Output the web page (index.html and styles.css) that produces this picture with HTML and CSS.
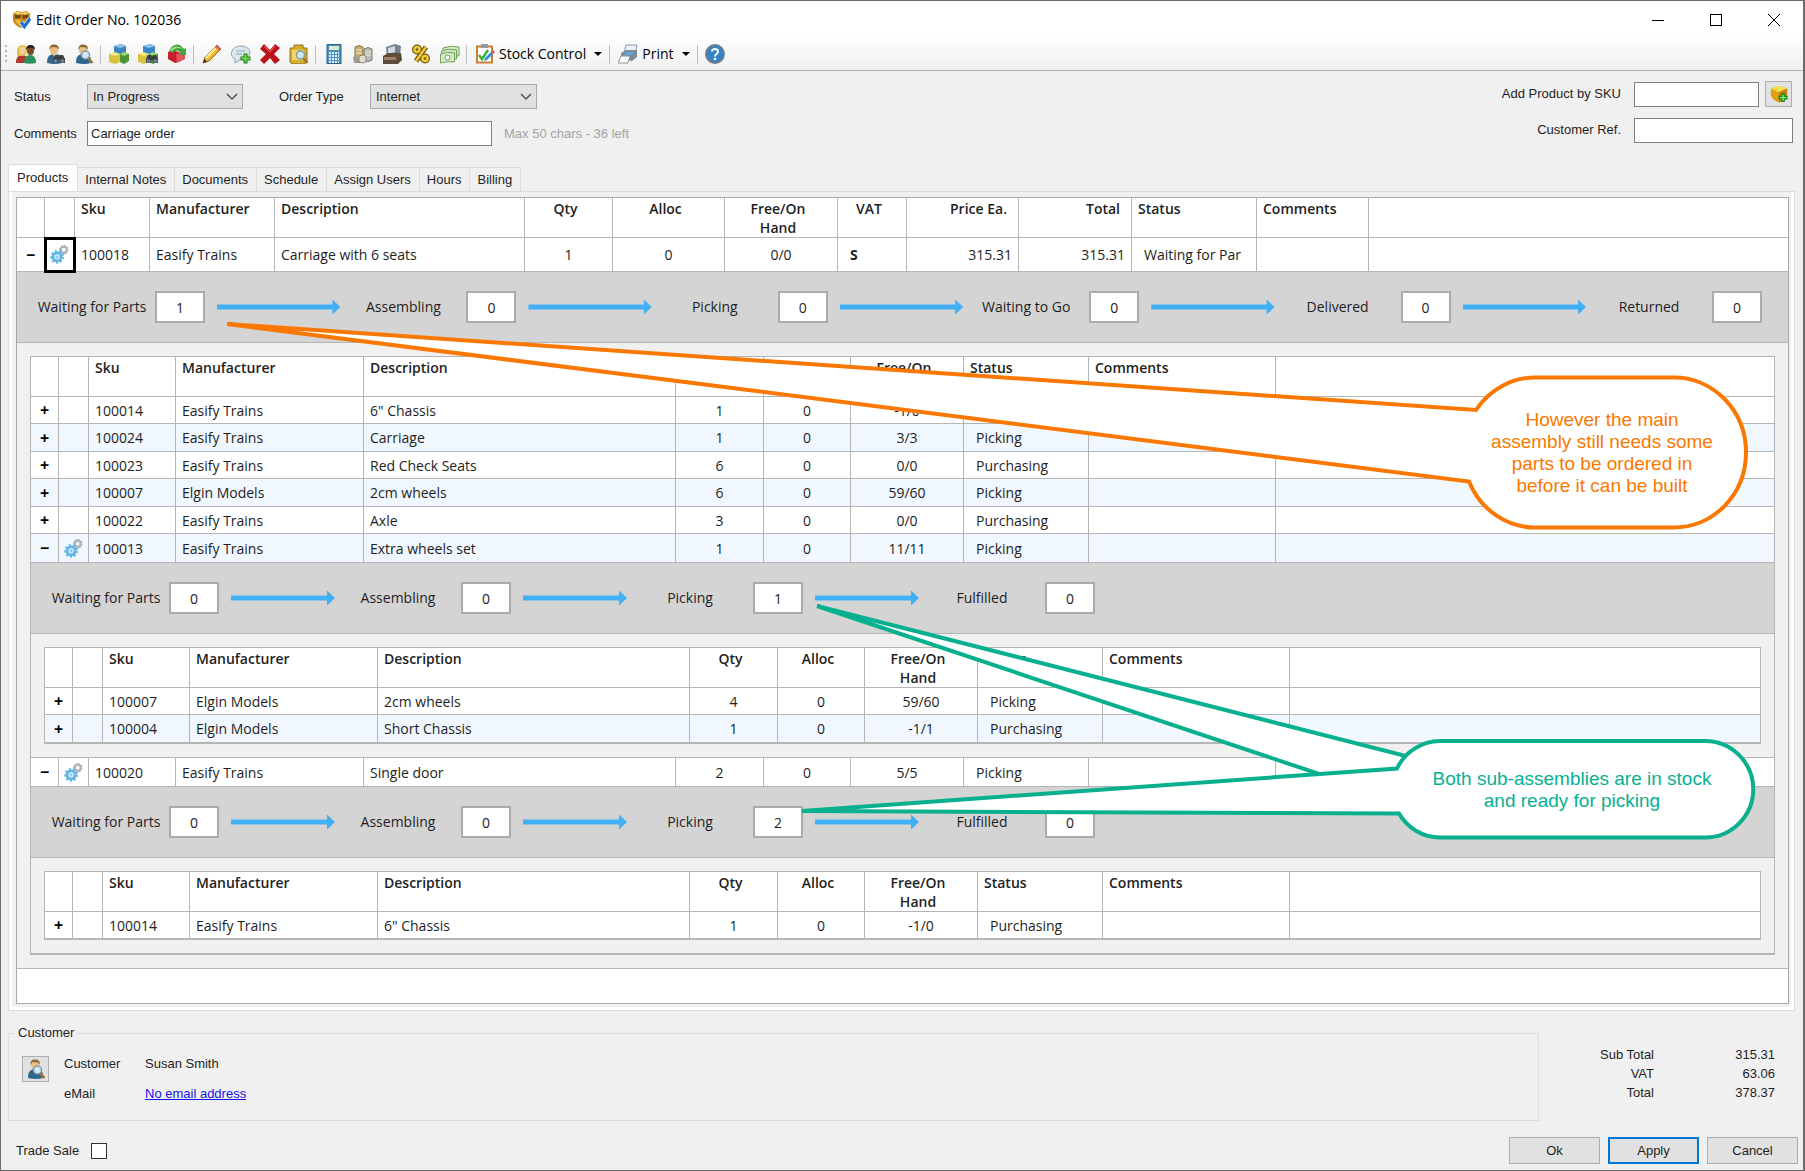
FILE: index.html
```html
<!DOCTYPE html>
<html lang="en">
<head>
<meta charset="utf-8">
<title>Edit Order No. 102036</title>
<link rel="stylesheet" href="styles.css">
</head>
<body>
<svg class="sprite" aria-hidden="true">
  <symbol id="i-person" viewBox="0 0 20 20">
    <path d="M2 19c0-6 2-9 8-9s7 3 7 9q-7 2-15 0z" fill="#2f6690"/>
    <path d="M8 10h4l-2 5z" fill="#dfeaf2"/>
    <ellipse cx="9" cy="6" rx="4" ry="5" fill="#e9bd84"/>
    <path d="M4.500 6Q4 0 9.500 0.500T13.500 6L12 3.500 6.500 3z" fill="#8a6a33"/>
  </symbol>
  <symbol id="i-binoc" viewBox="0 0 20 20">
    <path d="M8 19v-4l2-4h3l1 2 1-2h3l2 4v4h-5v-3h-2v3z" fill="#3a3f45"/>
    <circle cx="10.500" cy="17" r="2" fill="#6e7d89"/><circle cx="17.500" cy="17" r="2" fill="#6e7d89"/>
  </symbol>
  <symbol id="i-lens" viewBox="0 0 20 20">
    <path d="M14 14l4.500 5" stroke="#a5702c" stroke-width="2.500"/>
    <circle cx="11.500" cy="11" r="4" fill="#cfe8f7" stroke="#8699a5" stroke-width="1.500"/>
  </symbol>
  <symbol id="i-cubes" viewBox="0 0 20 20">
    <path d="M5 2l7-2 5 2v8l-6 2-6-2z" fill="#3b86c8"/><path d="M5 2l7-2 5 2-6 2z" fill="#8cc4ee"/>
    <path d="M0 10l5-2 6 2v8l-5 2-6-2z" fill="#d9c33c"/><path d="M0 10l5-2 6 2-5 2z" fill="#f6eb8e"/>
    <path d="M11 10l4-2 5 2v7l-5 3-4-2z" fill="#49952f"/><path d="M11 10l4-2 5 2-5 2z" fill="#9bd679"/>
  </symbol>
  <symbol id="i-gears" viewBox="0 0 20 20">
    <circle cx="14.500" cy="5" r="3.200" fill="none" stroke="#a9b1b9" stroke-width="2.400"/>
    <circle cx="14.500" cy="5" r="4.400" fill="none" stroke="#a9b1b9" stroke-width="1.200" stroke-dasharray="1.800 1.600"/>
    <circle cx="7.500" cy="12.500" r="4.300" fill="#d8effc" stroke="#5fb2e4" stroke-width="2.800"/>
    <circle cx="7.500" cy="12.500" r="6.300" fill="none" stroke="#5fb2e4" stroke-width="1.800" stroke-dasharray="2.200 2.200"/>
    <circle cx="7.500" cy="12.500" r="1.600" fill="#8cc8ec"/>
  </symbol>
  <symbol id="i-box" viewBox="0 0 20 20">
    <path d="M1 4l9-3 9 3v8q-3 6-9 7.500Q3 17 1 12z" fill="#e0a010"/>
    <path d="M1 4l9-3 9 3-9 4z" fill="#f9de55"/><path d="M10 8l9-4v8q-3 6-9 7.500z" fill="#c17f0c"/>
  </symbol>
</svg>

<div class="window">
  <header class="titlebar">
    <svg class="app-icon" viewBox="0 0 20 20"><path d="M1 4l4-3 5 1 5-1 4 3v7q-2 6-9 8-7-2-9-8z" fill="#c98a1a"/><path d="M3 5h6v4H3zM11 5h6v4h-6z" fill="#6f480e"/><path d="M2 3l4-1 4 1 4-1 4 1-4 2-4-1-4 1z" fill="#f6d267"/><path d="M3 10h6v6q-4-1-6-6z" fill="#efb733"/><path d="M9.500 13l3.500 4.500L19 9" fill="none" stroke="#fff" stroke-width="5"/><path d="M9.500 13l3.500 4.500L19 9" fill="none" stroke="#1f6fdc" stroke-width="3.500"/></svg>
    <h1 class="title">Edit Order No. 102036</h1>
    <button class="caption" aria-label="Minimise"><svg width="12" height="12"><path d="M0 6.500h12" stroke="#000"/></svg></button>
    <button class="caption" aria-label="Maximise"><svg width="12" height="12"><rect x=".5" y=".5" width="11" height="11" fill="none" stroke="#000"/></svg></button>
    <button class="caption" aria-label="Close"><svg width="12" height="12"><path d="M0 0l12 12M12 0L0 12" stroke="#000"/></svg></button>
  </header>

  <nav class="toolbar" aria-label="Order tools">
    <span class="grip"></span>
    <button class="tool" aria-label="Customers"><svg viewBox="0 0 20 20"><path d="M0 19q0-8 6-8t7 8z" fill="#b8352c"/><path d="M1 12Q0 1 6 1t5 6l-1 4-4 1z" fill="#e3c14e"/><ellipse cx="6.500" cy="6.500" rx="2.800" ry="3.800" fill="#f2cf9f"/><path d="M8 19q0-8 6-8t6 8q-6 1.500-12 0z" fill="#2f8f5a"/><ellipse cx="14.500" cy="6.500" rx="3.500" ry="4.500" fill="#7a4a26"/><path d="M10 6q0-5 4.500-5T19 6l-2-2h-5z" fill="#2b1d14"/></svg></button>
    <button class="tool" aria-label="Find customer"><svg viewBox="0 0 20 20"><use href="#i-person"/><use href="#i-binoc"/></svg></button>
    <button class="tool" aria-label="View customer"><svg viewBox="0 0 20 20"><use href="#i-person"/><use href="#i-lens"/></svg></button>
    <span class="sep"></span>
    <button class="tool" aria-label="Products"><svg viewBox="0 0 20 20"><use href="#i-cubes"/></svg></button>
    <button class="tool" aria-label="Find product"><svg viewBox="0 0 20 20"><use href="#i-cubes"/><use href="#i-binoc"/></svg></button>
    <button class="tool" aria-label="Refresh product"><svg viewBox="0 0 20 20"><path d="M1 8l5-2 8 3v8l-6 2-7-4z" fill="#c51f2d"/><path d="M9 10l9-2v7l-8 4z" fill="#e5505a"/><path d="M2 7Q6-1 13 1l4 4 2-1v7h-7l2-2Q9 4 6 9z" fill="#42a53c"/><path d="M3 6q4-5 10-3l2 2Q9 2 5 7z" fill="#9fdc8b"/></svg></button>
    <span class="sep"></span>
    <button class="tool" aria-label="Edit"><svg viewBox="0 0 20 20"><path d="M1 19l2-6L15 1l4 4L7 17z" fill="#eeb52e" stroke="#93641a"/><path d="M3 13L13 3l2 2L5 15z" fill="#fbe58e"/><path d="M15 1l4 4-2 2-4-4z" fill="#d46a55"/><path d="M1 19l1.500-4 2.500 2.500z" fill="#3c3020"/></svg></button>
    <button class="tool" aria-label="Add comment"><svg viewBox="0 0 20 20"><path d="M4 15q-4-2-3.500-6.500Q2 2 10 2t9 6.500Q18 15 10 15l-6 4z" fill="#dbe7ef" stroke="#8ba0b1"/><path d="M5 7h9M5 10h6" stroke="#93acbf"/><path d="M14.500 9.500v10M9.500 14.500h10" stroke="#1e7d1b" stroke-width="4"/><path d="M14.500 10.500v8M10.500 14.500h8" stroke="#6fd84d" stroke-width="2"/></svg></button>
    <button class="tool" aria-label="Delete"><svg viewBox="0 0 20 20"><path d="M4 0l6 6 5-6 5 4-6 6 6 6-5 4-5-6-6 6-4-4 6-6-6-5z" fill="#bd1118"/><path d="M4 2l6 6 5-6" fill="none" stroke="#ee7072"/></svg></button>
    <button class="tool" aria-label="View product"><svg viewBox="0 0 20 20"><path d="M1 4h4V1h9v3h4v14l-3 2H3l-2-2z" fill="#d6ae31" stroke="#92731c"/><path d="M3 6h12v10H3z" fill="#f0d56b"/><use href="#i-lens"/></svg></button>
    <span class="sep"></span>
    <button class="tool" aria-label="Calculator"><svg viewBox="0 0 20 20"><rect x="3" y=".5" width="14" height="19" fill="#4b8fc0" stroke="#2d658f"/><rect x="5" y="2" width="10" height="4" fill="#d7edc8"/><path d="M5 9h10M5 12h10M5 15h10M5 18h10" stroke="#e3f1fb" stroke-width="2" stroke-dasharray="2 1"/></svg></button>
    <button class="tool" aria-label="Payments"><svg viewBox="0 0 20 20"><path d="M2 3q4-3 8 0v14q-4 3-8 0z" fill="#c6b067" stroke="#837545"/><path d="M11 5q4-3 8 0v11q-4 3-8 0z" fill="#bcbcb5" stroke="#77776f"/><path d="M6 12q4-2 7 0v6q-3 2-7 0z" fill="#deded9" stroke="#83837b"/><path d="M3 6h6M3 9h6M12 8h6M12 11h6" stroke="#f4eedc"/><path d="M0 13h5v6H1z" fill="#9a9a92"/></svg></button>
    <button class="tool" aria-label="Till"><svg viewBox="0 0 20 20"><path d="M4 3l9-3 6 2-1 10-13 2z" fill="#77818b"/><path d="M6 4l7-2v6l-7 2z" fill="#cbdce8"/><path d="M1 12l5-3h13l1 7-4 4H1z" fill="#5c4a3b"/><path d="M2 13h12v3H2z" fill="#9d8068"/></svg></button>
    <button class="tool" aria-label="Discount"><svg viewBox="0 0 20 20"><g fill="none" stroke="#6f5714" stroke-width="5"><circle cx="6" cy="5.500" r="2.500"/><circle cx="14" cy="14.500" r="2.500"/><path d="M15 3L5 17"/></g><g fill="none" stroke="#f2c933" stroke-width="2.500"><circle cx="6" cy="5.500" r="2.500"/><circle cx="14" cy="14.500" r="2.500"/><path d="M15 3L5 17"/></g></svg></button>
    <button class="tool" aria-label="Cash"><svg viewBox="0 0 20 20"><g fill="#d2e9c4" stroke="#6fa35b"><path d="M3 4q7-3 16-1v9q-8-2-16 1z"/><path d="M1.500 7q7-3 15-1v9q-8-2-15 1z"/><path d="M.5 10q7-3 14-1v9q-7-1-14 1z"/></g><circle cx="7.500" cy="13.500" r="2.500" fill="#f6fbf2" stroke="#6fa35b"/></svg></button>
    <span class="sep"></span>
    <button class="tool tool-menu"><svg viewBox="0 0 20 20"><path d="M2 2.500h15v16H2z" fill="#fff" stroke="#c98035" stroke-width="2"/><path d="M6 0h7v4H6z" fill="#8f9aa5"/><path d="M4 11l3 4 6-9" fill="none" stroke="#3fae38" stroke-width="2.500"/><path d="M9 17l1-3 7-7 2 2-7 7z" fill="#2f8ede"/><path d="M16 8l2-2 2 2-2 2z" fill="#e2564e"/></svg><span>Stock Control</span><i class="caret"></i></button>
    <span class="sep"></span>
    <button class="tool tool-menu"><svg viewBox="0 0 20 20"><path d="M8 1h11l-2 8H6z" fill="#eef2f6" stroke="#8c98a3"/><path d="M3 9l5-3h11v7l-5 4-11-2z" fill="#7d8b98"/><path d="M5 10l4-2h8l-4 3z" fill="#5ea8dd"/><path d="M3 12h9l-2 7H0z" fill="#fafcfd" stroke="#8c98a3"/></svg><span>Print</span><i class="caret"></i></button>
    <span class="sep"></span>
    <button class="tool" aria-label="Help"><svg viewBox="0 0 20 20"><circle cx="10" cy="10" r="9" fill="#3483c4" stroke="#6b7d8c" stroke-width="2"/><path d="M7 7.500Q7 5 10 5t3 2.500Q13 9 11.500 10 10 11 10 12.500" fill="none" stroke="#fff" stroke-width="2"/><circle cx="10" cy="15" r="1.300" fill="#fff"/></svg></button>
  </nav>

  <form class="order">
    <div class="order-left">
      <label for="status">Status</label>
      <div class="row">
        <div class="combo combo-status"><select id="status"><option>In Progress</option></select><svg width="12" height="8"><path d="M1 1l5 5 5-5" fill="none" stroke="#555" stroke-width="1.500"/></svg></div>
        <label for="type" class="type-label">Order Type</label>
        <div class="combo combo-type"><select id="type"><option>Internet</option></select><svg width="12" height="8"><path d="M1 1l5 5 5-5" fill="none" stroke="#555" stroke-width="1.500"/></svg></div>
      </div>
      <label for="comments">Comments</label>
      <div class="row"><input class="box comments" id="comments" type="text" value="Carriage order"><span class="hint">Max 50 chars - 36 left</span></div>
    </div>
    <div class="order-right">
      <label for="sku">Add Product by SKU</label>
      <div class="row"><input class="box sku" id="sku" type="text"><button type="button" class="icon-btn" aria-label="Add product"><svg width="18" height="18" viewBox="0 0 20 20"><use href="#i-box"/><path d="M14.500 9v10M9.500 14h10" stroke="#0f8a12" stroke-width="4"/><path d="M14.500 10.500v7M11 14h7" stroke="#8ee87a" stroke-width="1.500"/></svg></button></div>
      <label for="ref">Customer Ref.</label>
      <input class="box" id="ref" type="text">
    </div>
  </form>

  <div class="tabs" role="tablist">
    <button class="tab active" role="tab" aria-selected="true">Products</button>
    <button class="tab" role="tab">Internal Notes</button>
    <button class="tab" role="tab">Documents</button>
    <button class="tab" role="tab">Schedule</button>
    <button class="tab" role="tab">Assign Users</button>
    <button class="tab" role="tab">Hours</button>
    <button class="tab" role="tab">Billing</button>
  </div>

  <main class="panel">
    <div class="frame">
      <table class="grid main-grid">
        <colgroup><col class="w28"><col class="w30"><col class="w75"><col class="w125"><col class="w250"><col class="w88"><col class="w112"><col class="w113"><col class="w69"><col class="w112"><col class="w113"><col class="w125"><col class="w112"><col></colgroup>
        <thead><tr><th></th><th></th><th>Sku</th><th>Manufacturer</th><th>Description</th><th class="c">Qty</th><th class="c">Alloc</th><th class="c">Free/On<br>Hand</th><th class="c">VAT</th><th class="r">Price Ea.</th><th class="r">Total</th><th>Status</th><th>Comments</th><th></th></tr></thead>
        <tbody>
          <tr class="open top"><td class="t"><button aria-label="Collapse">−</button></td><td class="t current"><svg class="gear"><use href="#i-gears"/></svg></td><td>100018</td><td>Easify Trains</td><td>Carriage with 6 seats</td><td class="c">1</td><td class="c">0</td><td class="c">0/0</td><td class="vat">S</td><td class="r">315.31</td><td class="r">315.31</td><td class="s">Waiting for Par</td><td></td><td></td></tr>
          <tr class="detail"><td colspan="14">
            <div class="flow">
              <label class="step"><span>Waiting for Parts</span><input value="1"></label><i class="arrow"></i>
              <label class="step"><span>Assembling</span><input value="0"></label><i class="arrow"></i>
              <label class="step"><span>Picking</span><input value="0"></label><i class="arrow"></i>
              <label class="step"><span>Waiting to Go</span><input value="0"></label><i class="arrow"></i>
              <label class="step"><span>Delivered</span><input value="0"></label><i class="arrow"></i>
              <label class="step"><span>Returned</span><input value="0"></label>
            </div>
            <div class="nest">
              <table class="grid sub-grid">
                <colgroup><col class="w28"><col class="w30"><col class="w87"><col class="w188"><col class="w312"><col class="w88"><col class="w87"><col class="w113"><col class="w125"><col class="w187"><col></colgroup>
                <thead><tr><th></th><th></th><th>Sku</th><th>Manufacturer</th><th>Description</th><th class="c">Qty</th><th class="c">Alloc</th><th class="c">Free/On<br>Hand</th><th>Status</th><th>Comments</th><th></th></tr></thead>
                <tbody>
                  <tr><td class="t"><button aria-label="Expand">+</button></td><td></td><td>100014</td><td>Easify Trains</td><td>6" Chassis</td><td class="c">1</td><td class="c">0</td><td class="c">-1/0</td><td></td><td></td><td></td></tr>
                  <tr class="alt"><td class="t"><button aria-label="Expand">+</button></td><td></td><td>100024</td><td>Easify Trains</td><td>Carriage</td><td class="c">1</td><td class="c">0</td><td class="c">3/3</td><td class="s">Picking</td><td></td><td></td></tr>
                  <tr><td class="t"><button aria-label="Expand">+</button></td><td></td><td>100023</td><td>Easify Trains</td><td>Red Check Seats</td><td class="c">6</td><td class="c">0</td><td class="c">0/0</td><td class="s">Purchasing</td><td></td><td></td></tr>
                  <tr class="alt"><td class="t"><button aria-label="Expand">+</button></td><td></td><td>100007</td><td>Elgin Models</td><td>2cm wheels</td><td class="c">6</td><td class="c">0</td><td class="c">59/60</td><td class="s">Picking</td><td></td><td></td></tr>
                  <tr><td class="t"><button aria-label="Expand">+</button></td><td></td><td>100022</td><td>Easify Trains</td><td>Axle</td><td class="c">3</td><td class="c">0</td><td class="c">0/0</td><td class="s">Purchasing</td><td></td><td></td></tr>
                  <tr class="alt open"><td class="t"><button aria-label="Collapse">−</button></td><td class="t"><svg class="gear"><use href="#i-gears"/></svg></td><td>100013</td><td>Easify Trains</td><td>Extra wheels set</td><td class="c">1</td><td class="c">0</td><td class="c">11/11</td><td class="s">Picking</td><td></td><td></td></tr>
                  <tr class="detail"><td colspan="11">
                    <div class="flow sub">
                      <label class="step"><span>Waiting for Parts</span><input value="0"></label><i class="arrow"></i>
                      <label class="step"><span>Assembling</span><input value="0"></label><i class="arrow"></i>
                      <label class="step"><span>Picking</span><input value="1"></label><i class="arrow"></i>
                      <label class="step"><span>Fulfilled</span><input value="0"></label>
                    </div>
                    <div class="nest">
                      <table class="grid sub-grid">
                        <colgroup><col class="w28"><col class="w30"><col class="w87"><col class="w188"><col class="w312"><col class="w88"><col class="w87"><col class="w113"><col class="w125"><col class="w187"><col></colgroup>
                        <thead><tr><th></th><th></th><th>Sku</th><th>Manufacturer</th><th>Description</th><th class="c">Qty</th><th class="c">Alloc</th><th class="c">Free/On<br>Hand</th><th>Status</th><th>Comments</th><th></th></tr></thead>
                        <tbody>
                          <tr><td class="t"><button aria-label="Expand">+</button></td><td></td><td>100007</td><td>Elgin Models</td><td>2cm wheels</td><td class="c">4</td><td class="c">0</td><td class="c">59/60</td><td class="s">Picking</td><td></td><td></td></tr>
                          <tr class="alt"><td class="t"><button aria-label="Expand">+</button></td><td></td><td>100004</td><td>Elgin Models</td><td>Short Chassis</td><td class="c">1</td><td class="c">0</td><td class="c">-1/1</td><td class="s">Purchasing</td><td></td><td></td></tr>
                        </tbody>
                      </table>
                    </div>
                  </td></tr>
                  <tr class="open"><td class="t"><button aria-label="Collapse">−</button></td><td class="t"><svg class="gear"><use href="#i-gears"/></svg></td><td>100020</td><td>Easify Trains</td><td>Single door</td><td class="c">2</td><td class="c">0</td><td class="c">5/5</td><td class="s">Picking</td><td></td><td></td></tr>
                  <tr class="detail"><td colspan="11">
                    <div class="flow sub">
                      <label class="step"><span>Waiting for Parts</span><input value="0"></label><i class="arrow"></i>
                      <label class="step"><span>Assembling</span><input value="0"></label><i class="arrow"></i>
                      <label class="step"><span>Picking</span><input value="2"></label><i class="arrow"></i>
                      <label class="step"><span>Fulfilled</span><input value="0"></label>
                    </div>
                    <div class="nest">
                      <table class="grid sub-grid">
                        <colgroup><col class="w28"><col class="w30"><col class="w87"><col class="w188"><col class="w312"><col class="w88"><col class="w87"><col class="w113"><col class="w125"><col class="w187"><col></colgroup>
                        <thead><tr><th></th><th></th><th>Sku</th><th>Manufacturer</th><th>Description</th><th class="c">Qty</th><th class="c">Alloc</th><th class="c">Free/On<br>Hand</th><th>Status</th><th>Comments</th><th></th></tr></thead>
                        <tbody>
                          <tr><td class="t"><button aria-label="Expand">+</button></td><td></td><td>100014</td><td>Easify Trains</td><td>6" Chassis</td><td class="c">1</td><td class="c">0</td><td class="c">-1/0</td><td class="s">Purchasing</td><td></td><td></td></tr>
                        </tbody>
                      </table>
                    </div>
                  </td></tr>
                </tbody>
              </table>
            </div>
          </td></tr>
        </tbody>
      </table>
    </div>
  </main>

  <section class="summary">
    <fieldset class="customer">
      <legend>Customer</legend>
      <button class="icon-btn" aria-label="View customer"><svg width="20" height="20"><use href="#i-person"/><use href="#i-lens"/></svg></button>
      <dl>
        <dt>Customer</dt><dd>Susan Smith</dd>
        <dt>eMail</dt><dd><a href="#">No email address</a></dd>
      </dl>
    </fieldset>
    <dl class="totals">
      <dt>Sub Total</dt><dd>315.31</dd>
      <dt>VAT</dt><dd>63.06</dd>
      <dt>Total</dt><dd>378.37</dd>
    </dl>
  </section>

  <footer class="footer">
    <label class="trade">Trade Sale <input type="checkbox"></label>
    <button class="btn">Ok</button>
    <button class="btn primary">Apply</button>
    <button class="btn">Cancel</button>
  </footer>

  <div class="notes">
    <svg class="note-shapes" width="1800" height="900">
      <path class="orange" d="M227 324L1476 410A72 75 0 0 1 1536 377.500H1674A72 75 0 0 1 1674 527.500H1536A72 75 0 0 1 1469 481.500Z"/>
      <path class="green" d="M817 606L1406 756V803Z"/>
      <path class="green" d="M802 811L1397 768.500A48 48 0 0 1 1440 741H1705A48 48 0 0 1 1705 837.500H1440A48 48 0 0 1 1399 813.500Z"/>
    </svg>
    <p class="note note-orange">However the main<br>assembly still needs some<br>parts to be ordered in<br>before it can be built</p>
    <p class="note note-green">Both sub-assemblies are in stock<br>and ready for picking</p>
  </div>
</div>
</body>
</html>
```
FILE: styles.css
```css
* { box-sizing: border-box; }

body {
  margin: 0;
  background: #f0f0f0;
  color: #1e1e1e;
  font: 13px/16px "Liberation Sans", Arial, sans-serif;
}

button, input, select { font: inherit; color: inherit; margin: 0; border-radius: 0; }
button { padding: 0; border: 0; background: none; }
svg { display: block; }
.sprite { position: absolute; width: 0; height: 0; }

.window {
  position: relative;
  display: flex;
  flex-direction: column;
  min-height: 100vh;
  border: 1px solid #6b6b6b;
  border-right-width: 2px;
}

/* Title bar */
.titlebar {
  display: flex;
  align-items: center;
  height: 37px;
  padding-left: 11px;
  background: #fff;
}
.app-icon { width: 19px; height: 19px; }
.title {
  flex: 1;
  margin: 0 0 0 5px;
  font: 14px/20px "Open Sans", "Noto Sans", sans-serif;
  color: #000;
}
.caption { display: grid; place-items: center; width: 58px; height: 37px; }

/* Toolbar */
.toolbar {
  display: flex;
  align-items: center;
  height: 33px;
  padding-left: 4px;
  border-bottom: 1px solid #b4b4b4;
  background: linear-gradient(#fdfdfd, #f0f0f0);
}
.grip { width: 2px; height: 18px; margin-right: 4px; background: repeating-linear-gradient(#b8b8b8 0 2px, transparent 2px 5px); }
.tool { display: grid; place-items: center; width: 29px; height: 26px; }
.tool svg { width: 20px; height: 20px; }
.sep { width: 1px; height: 19px; margin: 0 3px 0 2px; background: #bdbdbd; }
.tool-menu {
  display: flex;
  align-items: center;
  gap: 4px;
  width: auto;
  padding: 0 5px;
  font: 14px/20px "Open Sans", "Noto Sans", sans-serif;
  color: #000;
}
.caret { margin-left: 4px; border: 4px solid transparent; border-top-color: #000; border-bottom: 0; }

/* Order fields */
.order { display: flex; justify-content: space-between; height: 93px; padding: 10px 10px 0 13px; }
.row { display: flex; align-items: center; }
.order-left {
  display: grid;
  grid-template-columns: 73px auto;
  grid-auto-rows: 25px;
  row-gap: 12px;
  align-items: center;
  padding-top: 3px;
}
.order-right {
  display: grid;
  grid-template-columns: auto 159px;
  grid-auto-rows: 26px;
  gap: 10px 13px;
  align-items: center;
  text-align: right;
}
.combo { position: relative; }
.combo select {
  width: 100%;
  height: 25px;
  padding: 0 5px;
  border: 1px solid #a3abb3;
  background: #e1e1e1;
  appearance: none;
}
.combo svg { position: absolute; right: 5px; top: 9px; pointer-events: none; }
.combo-status { width: 156px; }
.combo-type { width: 167px; }
.type-label { width: 91px; margin-left: 36px; }
.box { width: 100%; height: 25px; padding: 0 3px; border: 1px solid #7f7f7f; background: #fff; }
.comments { width: 405px; }
.sku { width: 125px; margin-right: 6px; }
.hint { margin-left: 12px; color: #a3a3a3; }
.icon-btn { display: grid; place-items: center; width: 27px; height: 26px; border: 1px solid #adadad; background: #e1e1e1; }

/* Tabs */
.tabs { display: flex; align-items: flex-end; padding-left: 7px; }
.tab {
  height: 24px;
  padding: 0 8px 0 7px;
  border: 1px solid #dcdcdc;
  border-width: 1px 1px 0 0;
}
.tab.active { height: 27px; padding: 0 9px 0 8px; border-left-width: 1px; background: #fff; }

.panel {
  display: flex;
  flex: 1;
  margin: 0 8px 0 7px;
  padding: 5px 5px 6px 7px;
  border: 1px solid #dcdcdc;
  box-shadow: inset 3px -3px 0 #fff, inset -3px 0 0 #fff;
}
.frame { flex: 1; min-width: 0; border: 1px solid #a9a9ab; background: #fff; }

/* Grids */
.grid {
  width: 100%;
  table-layout: fixed;
  border-spacing: 0;
  font: 14px/20px "Open Sans", "Noto Sans", sans-serif;
}
.w28 { width: 28px; } .w30 { width: 30px; } .w69 { width: 69px; } .w75 { width: 75px; }
.w87 { width: 87px; } .w88 { width: 88px; } .w112 { width: 112px; } .w113 { width: 113px; }
.w125 { width: 125px; } .w187 { width: 187px; } .w188 { width: 188px; }
.w250 { width: 250px; } .w312 { width: 312px; }

.grid th, .grid td {
  padding: 0 0 0 6px;
  border: solid #b5b5b5;
  border-width: 0 1px 1px 0;
  text-align: left;
  overflow: hidden;
}
.main-grid > * > tr > :last-child { border-right: 0; }
.grid th { height: 40px; padding-top: 1px; background: #fff; line-height: 19px; font-weight: 600; vertical-align: top; }
.grid td { height: 27px; padding-top: 1px; background: #fff; white-space: nowrap; }
.grid .alt > td { height: 28px; background: #f0f7fe; }
.grid .open > td { height: 29px; }
.grid .top > td { height: 34px; }
.grid th.c { text-align: center; padding: 1px 6px 0 0; }
.grid td.c { text-align: center; padding-left: 0; }
.grid th.r { text-align: right; padding-right: 11px; }
.grid td.r { text-align: right; padding-right: 6px; }
.grid td.s { padding-left: 12px; }
.grid td.vat { padding-left: 12px; font-weight: 700; }
.grid td.t { padding: 0; }
.grid td.t button { display: block; width: 100%; font: 700 16px/20px "Open Sans", "Noto Sans", sans-serif; color: #000; }
.grid td.current { outline: 3px solid #000; outline-offset: -2px; }
.gear { width: 19px; height: 19px; margin: 0 auto; }

.grid .detail > td { padding: 0; background: #f0f0f0; white-space: normal; }
.nest { padding: 13px; }
.sub-grid { border: solid #b5b5b5; border-width: 1px 0 1px 1px; }

/* Progress strip */
.flow {
  display: flex;
  align-items: center;
  height: 71px;
  padding: 0 26px 0 12px;
  border-bottom: 1px solid #b5b5b5;
  background: #d5d4d4;
}
.step { display: flex; align-items: center; }
.step span { width: 126px; text-align: center; }
.step input {
  width: 50px;
  height: 32px;
  padding: 0;
  border: 2px solid #ababad;
  background: #fff;
  text-align: center;
}
.arrow {
  flex: 1;
  height: 15px;
  margin-left: 12px;
  background: #42b0f5;
  clip-path: polygon(0 5px, calc(100% - 8px) 5px, calc(100% - 8px) 0, 100% 50%, calc(100% - 8px) 100%, calc(100% - 8px) 10px, 0 10px);
}
.flow.sub .arrow { flex: 0 0 104px; }

/* Customer and totals */
.summary { display: flex; justify-content: space-between; padding: 14px 28px 0 7px; }
.customer {
  display: flex;
  flex: 0 1 1531px;
  height: 96px;
  margin: 0;
  padding: 15px 0 0 13px;
  border: 1px solid #dcdcdc;
}
.customer legend { margin-left: -7px; padding: 0 3px; }
dl { display: grid; margin: 0; }
dd { margin: 0; }
.customer dl { grid-template-columns: 81px auto; grid-auto-rows: 30px; margin-left: 15px; }
.customer a { color: #1414ee; }
.totals { grid-template-columns: auto 121px; grid-auto-rows: 19px; padding-top: 22px; text-align: right; }

/* Footer */
.footer { display: flex; align-items: center; gap: 8px; padding: 16px 5px 6px 15px; }
.trade { display: flex; align-items: center; gap: 12px; margin-right: auto; }
.trade input { width: 16px; height: 16px; margin: 0; border: 1px solid #333; background: #fff; appearance: none; }
.btn { width: 91px; height: 27px; border: 1px solid #adadad; background: #e1e1e1; }
.btn.primary { border: 2px solid #0078d7; }

/* Callouts laid over the window */
.notes { position: absolute; top: -1px; left: -1px; pointer-events: none; }
.note-shapes path { fill: #fff; stroke-width: 4; }
.note-shapes .orange { stroke: #fa7800; }
.note-shapes .green { stroke: #08b090; }
.note { position: absolute; margin: 0; font-size: 19px; line-height: 22px; text-align: center; white-space: nowrap; }
.note-orange { left: 1482px; top: 409px; width: 240px; color: #fa7800; }
.note-green { left: 1422px; top: 768px; width: 300px; color: #08b090; }
```
